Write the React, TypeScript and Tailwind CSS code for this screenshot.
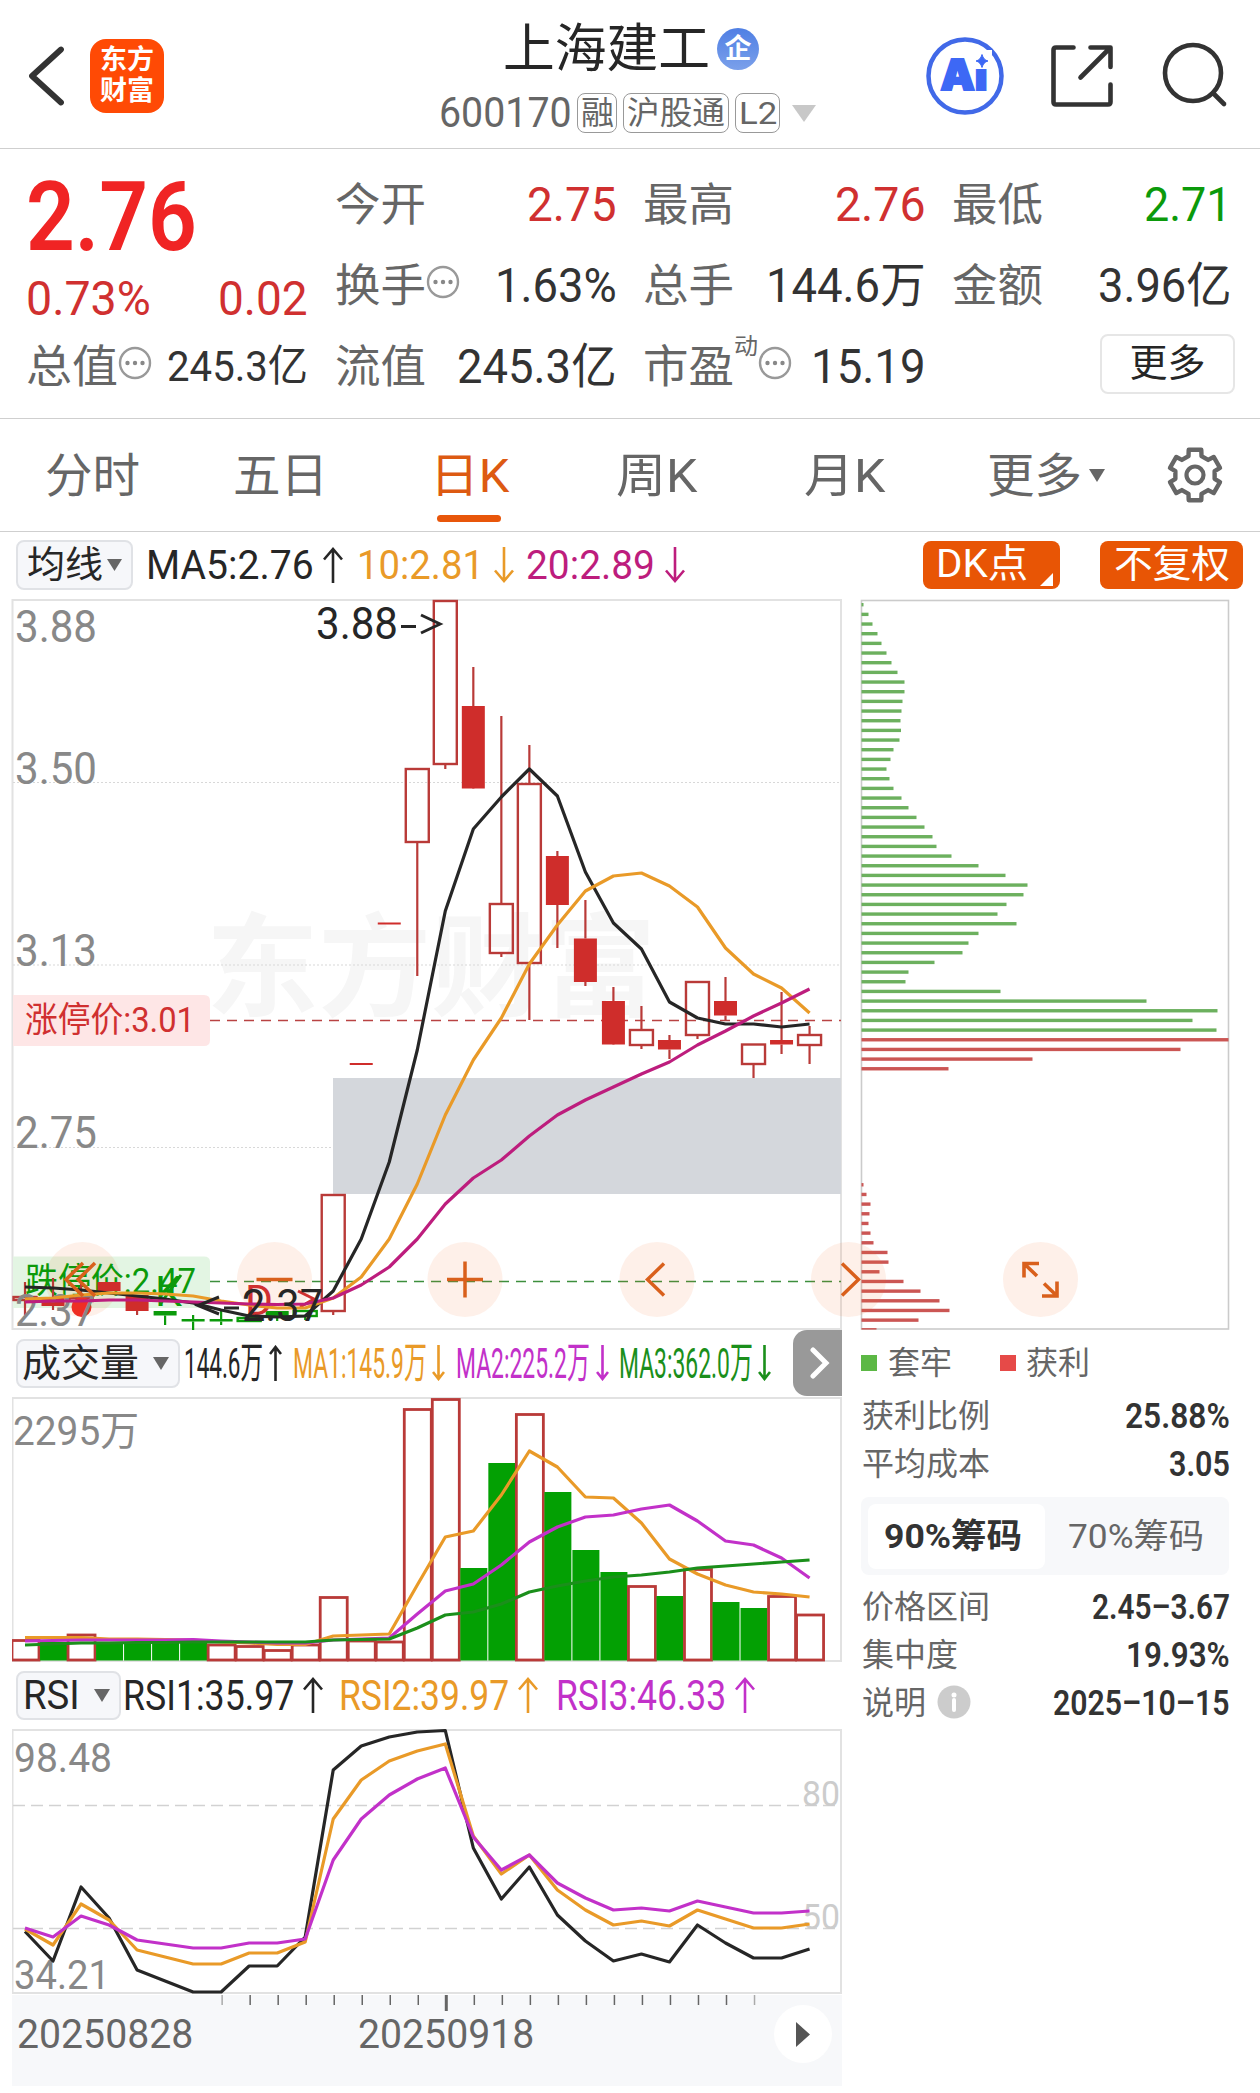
import React, { useLayoutEffect, useRef, useState } from "react";

/* ---------- helpers ---------- */

const FONT = "font-[Roboto,'Noto_Sans_CJK_SC',sans-serif]";

/** One line of text, condensed or widened to the given width. */
function Fit({ w, className = "", children }: { w: number; className?: string; children: React.ReactNode }) {
  const ref = useRef<HTMLSpanElement>(null);
  const [scale, setScale] = useState(1);
  useLayoutEffect(() => {
    if (ref.current) setScale(w / ref.current.offsetWidth);
  }, [w]);
  return (
    <span className={`block shrink-0 whitespace-nowrap ${className}`} style={{ width: w }}>
      <span ref={ref} className="inline-block origin-left" style={{ transform: `scaleX(${scale})` }}>
        {children}
      </span>
    </span>
  );
}

function Dots({ className = "" }: { className?: string }) {
  return (
    <svg width="34" height="34" viewBox="0 0 34 34" className={`shrink-0 ${className}`}>
      <circle cx="17" cy="17" r="15" fill="none" stroke="#999" strokeWidth="2.4" />
      <circle cx="9.5" cy="17" r="2.2" fill="#888" />
      <circle cx="17" cy="17" r="2.2" fill="#888" />
      <circle cx="24.5" cy="17" r="2.2" fill="#888" />
    </svg>
  );
}

function Down({ w, h, color = "#666", className = "" }: { w: number; h: number; color?: string; className?: string }) {
  return (
    <svg width={w} height={h} viewBox="0 0 10 10" preserveAspectRatio="none" className={`shrink-0 ${className}`}>
      <path d="M0 0H10L5 10Z" fill={color} />
    </svg>
  );
}

function Arrow({ up, w, color, className = "" }: { up?: boolean; w: number; color: string; className?: string }) {
  return (
    <svg width={w} height="36" viewBox={`0 0 ${w} 36`} className={`shrink-0 ${className}`}>
      <g fill="none" stroke={color} strokeWidth="2.6" transform={up ? undefined : "rotate(180 " + w / 2 + " 18)"}>
        <path d={`M${w / 2} 36V2M1 ${w / 2 + 2.5}L${w / 2} 2L${w - 1} ${w / 2 + 2.5}`} />
      </g>
    </svg>
  );
}

const RED = "#d03030";
const CANDLE = "#b93a38";
const GREEN = "#0b9a0b";
const ORANGE = "#e99a28";
const MAGENTA = "#bd1d7d";
const PURPLE = "#c231c9";
const INK = "#262626";

const cx = (i: number) => 25 + 28.02 * i;
const line = (ys: number[]) => ys.map((y, i) => `${cx(i)},${y}`).join(" ");

/* ---------- data ---------- */

const MA5 = [1287, 1288, 1290, 1293, 1296, 1299, 1303, 1310, 1316, 1317, 1316, 1291, 1239, 1162, 1050, 911, 829, 797, 769, 796, 872, 923, 949, 1002, 1018, 1024, 1024, 1027, 1024];
const MA10 = [1299, 1298, 1295, 1293, 1293, 1294, 1296, 1301, 1305, 1308, 1308, 1298, 1277, 1239, 1184, 1115, 1060, 1018, 964, 925, 891, 876, 873, 886, 907, 948, 974, 988, 1013];
const MA20 = [1302, 1301, 1301, 1300, 1300, 1301, 1302, 1303, 1304, 1304.5, 1304, 1298, 1285, 1267, 1239, 1204, 1178, 1160, 1136, 1115, 1100, 1087, 1074, 1062, 1045, 1031, 1016, 1003, 989];

/** kind, body top, body bottom, wick top, wick bottom */
type Candle = ["h" | "f" | "g" | "gh", number, number, number, number];
const CANDLES: Candle[] = [
  ["h", 1297, 1300, 1282, 1315],
  ["f", 1298, 1306, 1278, 1310],
  ["h", 1298, 1301, 1284, 1304],
  ["f", 1282, 1291, 1282, 1291],
  ["f", 1295, 1311, 1295, 1315],
  ["g", 1311, 1315.5, 1311, 1325],
  ["g", 1319, 1321.5, 1315, 1330],
  ["g", 1319, 1321.5, 1309, 1325],
  ["gh", 1318, 1321, 1318, 1321],
  ["g", 1311, 1318, 1311, 1321],
  ["gh", 1311, 1316, 1311, 1320],
  ["h", 1195, 1311, 1195, 1315],
  ["f", 1063, 1065, 1063, 1065],
  ["f", 922.5, 924.5, 922.5, 924.5],
  ["h", 769, 842, 769, 976],
  ["h", 601, 764, 601, 769],
  ["f", 706, 788.5, 667, 789],
  ["h", 904, 953, 716, 957],
  ["h", 784, 963, 745, 1020],
  ["f", 856, 905, 851, 948],
  ["f", 938.5, 982, 900, 986],
  ["f", 1001, 1044.5, 987, 1045],
  ["h", 1030, 1045, 1006, 1049],
  ["f", 1040, 1049.5, 1035, 1059],
  ["h", 982, 1035, 982, 1039],
  ["f", 1001, 1015.5, 977, 1020],
  ["h", 1044.5, 1064, 1044.5, 1078],
  ["f", 1040, 1044.5, 992, 1054],
  ["h", 1035, 1045, 1026, 1064],
];

const VOL: ["r" | "g", number][] = [
  ["r", 1640.5], ["g", 1642], ["r", 1635], ["g", 1643], ["g", 1643], ["g", 1643], ["g", 1643], ["r", 1645], ["r", 1646.5], ["r", 1650.5],
  ["r", 1645], ["r", 1597.5], ["r", 1641], ["r", 1642], ["r", 1409.5], ["r", 1399.5], ["g", 1568], ["g", 1463], ["r", 1414.5], ["g", 1492],
  ["g", 1550], ["g", 1572], ["r", 1586.5], ["g", 1596], ["r", 1569.5], ["g", 1602], ["g", 1608], ["r", 1596.5], ["r", 1615],
];
const V5 = [1637.5, 1637.5, 1637.5, 1639, 1639, 1639.5, 1640, 1642, 1643, 1644.5, 1644.5, 1636, 1635, 1634, 1585, 1537, 1531, 1495, 1451, 1467, 1497, 1498, 1523, 1559, 1574, 1585, 1592, 1594, 1597];
const V10 = [1641, 1640.5, 1640, 1640, 1640, 1640, 1639.5, 1641, 1642, 1643, 1643, 1640, 1639, 1638, 1614, 1591, 1584, 1565, 1542, 1527, 1517, 1515, 1509, 1505, 1521, 1541, 1545, 1558, 1578];
const V20 = [1645, 1644, 1643, 1643, 1642.5, 1642.5, 1642, 1642, 1642, 1642, 1642, 1640, 1639.5, 1639, 1628, 1615, 1612, 1604, 1592, 1586, 1581, 1577, 1575, 1572, 1568, 1566, 1564, 1562, 1560];

const R1 = [1931.5, 1961, 1887, 1918, 1970, 1981, 1992, 1992, 1966, 1966, 1937, 1770, 1746, 1737, 1732, 1730.5, 1848, 1899, 1867, 1915, 1941, 1961, 1954, 1962, 1925, 1943, 1958, 1958, 1949];
const R2 = [1929, 1945, 1904, 1920, 1950, 1957, 1964, 1964, 1953, 1953, 1942, 1819, 1780, 1761, 1751, 1744, 1836, 1874, 1855, 1890, 1910, 1925, 1921, 1926, 1910, 1919, 1928, 1928, 1924];
const R3 = [1928, 1937, 1916, 1925, 1940, 1944, 1948, 1948, 1943, 1943, 1939, 1860, 1819, 1795, 1779, 1768, 1837, 1870, 1855, 1883, 1898, 1910, 1908, 1911, 1901, 1907, 1913, 1913, 1911];

const CHIPS_GREEN = [
  2, 7, 11, 16, 20, 25, 30, 36, 43, 43, 41, 40, 39, 39.5, 38, 32, 29, 25, 28, 32, 40, 47, 55, 63, 71, 75, 90, 117, 144, 166, 162, 145, 136, 155, 117, 107,
  101, 73, 47, 44, 139, 285, 356, 331, 355,
];
const CHIPS_RED = [367, 319, 171, 87];
const CHIPS_RED_LOW = [2, 5, 9, 8, 7, 9, 12, 26, 27, 18, 42, 59, 78, 88, 57, 15];

/* ---------- header ---------- */

function Tag({ w, inner, children }: { w: number; inner: number; children: React.ReactNode }) {
  return (
    <span className="flex h-10 shrink-0 items-center justify-center rounded-lg border-[1.5px] border-[#999] text-[32px] leading-none text-[#666]" style={{ width: w }}>
      <Fit w={inner}>{children}</Fit>
    </span>
  );
}

function Header() {
  return (
    <header className="flex h-[149px] border-b border-[#cfcfcf]">
      <div className="flex w-[439px] shrink-0 items-start pl-7 pt-[39px]">
        <svg width="36" height="74" viewBox="28 39 36 74">
          <path d="M61 49.500L32 76L61 102.500" fill="none" stroke="#333" strokeWidth="5.800" strokeLinecap="round" strokeLinejoin="round" />
        </svg>
        <div className="ml-[26px] flex h-[74px] w-[74px] flex-col items-center justify-center rounded-[16px] bg-[#ff4a05] text-[27px] font-bold leading-[31px] text-white">
          <Fit w={54}>东方</Fit>
          <Fit w={54}>财富</Fit>
        </div>
      </div>
      <div className="w-[378px] shrink-0 pt-[17px]">
        <div className="flex h-16 items-center pl-[64px] text-[52px] leading-none text-[#262626]">
          <Fit w={207} className="pt-0.5">上海建工</Fit>
          <span className="ml-[7px] flex h-[42px] w-[42px] items-center justify-center rounded-full bg-gradient-to-b from-[#4f7fe4] to-[#7ba0ea] text-[27px] font-bold leading-none text-white">
            企
          </span>
        </div>
        <div className="flex h-16 items-center text-[42px] leading-none text-[#666]">
          <Fit w={133} className="mr-[5px]">600170</Fit>
          <Tag w={40} inner={33}>融</Tag>
          <span className="w-1.5 shrink-0" />
          <Tag w={106} inner={98}>沪股通</Tag>
          <span className="w-1.5 shrink-0" />
          <Tag w={45} inner={38}>L2</Tag>
          <Down w={24} h={17} color="#c8c8c8" className="ml-3" />
        </div>
      </div>
      <svg width="320" height="110" viewBox="920 20 320 110" className="ml-[103px] mt-5">
        <circle cx="965" cy="76" r="36.500" fill="none" stroke="#4169e8" strokeWidth="4.500" />
        <text x="940.500" y="90" fontSize="42" fontWeight="900" fill="#3d68f5" stroke="#3d68f5" strokeWidth="2" textLength="47" lengthAdjust="spacingAndGlyphs" className="font-[Inter,sans-serif]">
          Ai
        </text>
        <rect x="971" y="50" width="21" height="19" fill="#fff" />
        <path d="M982 54.500Q983.500 60 988 61Q983.500 62 982 67.500Q980.500 62 976 61Q980.500 60 982 54.500Z" fill="#3d68f5" stroke="#3d68f5" />
        <g fill="none" stroke="#333" strokeWidth="4.600" strokeLinecap="round" strokeLinejoin="round">
          <path d="M1073.500 47.500H1056Q1053.500 47.500 1053.500 50V102Q1053.500 104.500 1056 104.500H1108Q1110.500 104.500 1110.500 102V84.500" />
          <path d="M1090.500 47.500H1110.500V67M1110 48L1080.500 77.500" />
          <circle cx="1193" cy="73" r="28" />
          <path d="M1213 93L1224 104" />
        </g>
      </svg>
    </header>
  );
}

/* ---------- quote ---------- */

function Cell({ label, lw = 91, dots, sup, value, vw, small, color = "text-[#333]" }: { label: string; lw?: number; dots?: boolean; sup?: string; value?: string; vw?: number; small?: boolean; color?: string }) {
  return (
    <div className="flex h-[81px] items-center justify-between leading-none">
      <div className="flex items-center">
        <Fit w={lw} className="pt-0.5 text-[45px] leading-[46px] text-[#666]">{label}</Fit>
        {sup && <Fit w={24} className="mb-10 text-[23px] leading-6 text-[#666]">{sup}</Fit>}
        {dots && <Dots className="mb-[7px]" />}
      </div>
      {value && <Fit w={vw ?? 90} className={`${small ? "text-[43px]" : "text-[48px]"} ${color}`}>{value}</Fit>}
    </div>
  );
}

function Quote() {
  return (
    <section className="flex h-[270px] border-b border-[#cfcfcf] pl-[26px] pt-[15px]">
      <div className="w-[282px]">
        <div className="flex h-[106px] items-center text-[96px] font-semibold leading-none text-[#f02424]">
          <Fit w={171}>2.76</Fit>
        </div>
        <div className="flex h-14 items-center justify-between pt-0.5 text-[48px] leading-none text-[#d03030]">
          <Fit w={125}>0.73%</Fit>
          <Fit w={90}>0.02</Fit>
        </div>
        <Cell label="总值" lw={92} dots value="245.3亿" vw={141} small />
      </div>
      <div className="ml-[27px] w-[282px]">
        <Cell label="今开" value="2.75" vw={90} color="text-[#d03030]" />
        <Cell label="换手" dots value="1.63%" vw={122} />
        <Cell label="流值" value="245.3亿" vw={160} />
      </div>
      <div className="ml-[26px] w-[283px]">
        <Cell label="最高" value="2.76" vw={91} color="text-[#d03030]" />
        <Cell label="总手" value="144.6万" vw={160} />
        <Cell label="市盈" sup="动" dots value="15.19" vw={115} />
      </div>
      <div className="ml-[26px] w-[280px]">
        <Cell label="最低" value="2.71" vw={88} color="text-[#0b9a0b]" />
        <Cell label="金额" value="3.96亿" vw={134} />
        <div className="ml-[148px] mt-[8px] flex h-[60px] w-[135px] items-center justify-center rounded-lg border-2 border-[#e6e6e6] text-[38px] leading-none text-[#262626]">
          <Fit w={76} className="pb-0.5">更多</Fit>
        </div>
      </div>
    </section>
  );
}

/* ---------- tabs ---------- */

function gearPath() {
  const pts: string[] = [];
  for (let k = 0; k < 6; k++) {
    const a = -90 + 60 * k;
    for (const [d, r] of [[-19, 20], [-14, 26], [14, 26], [19, 20]]) {
      const t = ((a + d) * Math.PI) / 180;
      pts.push(`${(28 + r * Math.cos(t)).toFixed(2)},${(28 + r * Math.sin(t)).toFixed(2)}`);
    }
  }
  return pts.join(" ");
}

function Tabs() {
  return (
    <nav className="flex h-[113px] items-start border-b border-[#cfcfcf] pt-[28px] text-[47px] leading-[58px] text-[#666]">
      <Fit w={95} className="ml-[45px]">分时</Fit>
      <Fit w={95} className="ml-[93px]">五日</Fit>
      <div className="ml-[102px] w-[79px] text-[#dd5a12]">
        <Fit w={80}>日K</Fit>
        <div className="ml-[7px] mt-[10px] h-[7px] w-[64px] rounded-full bg-[#e8560a]" />
      </div>
      <Fit w={82} className="ml-[107px]">周K</Fit>
      <Fit w={82} className="ml-[106px]">月K</Fit>
      <Fit w={95} className="ml-[101px]">更多</Fit>
      <Down w={16} h={13} className="ml-[7px] mt-[22px]" />
      <svg width="56" height="56" viewBox="0 0 56 56" className="ml-[62px]">
        <polygon points={gearPath()} fill="none" stroke="#666" strokeWidth="4.400" strokeLinejoin="round" />
        <circle cx="28" cy="28" r="8.500" fill="none" stroke="#666" strokeWidth="4.200" />
      </svg>
    </nav>
  );
}

/* ---------- indicator rows ---------- */

const PILL = "flex shrink-0 items-center rounded-lg border-2 border-[#e0e2e6] bg-[#f6f7fa] text-[#262626]";

function AverageRow() {
  return (
    <div className="flex h-[66px] items-center text-[41px] leading-none">
      <div className={`${PILL} ml-4 h-[50px] w-[117px] pl-[9px] text-[37px]`}>
        <Fit w={76}>均线</Fit>
        <Down w={15} h={12} className="ml-[4px]" />
      </div>
      <Fit w={168} className="ml-[13px] text-[#262626]">MA5:2.76</Fit>
      <Arrow up w={20} color={INK} className="ml-[9px]" />
      <Fit w={127} className="ml-[14px] text-[#e99a28]">10:2.81</Fit>
      <Arrow w={20} color={ORANGE} className="ml-[10px]" />
      <Fit w={129} className="ml-[12px] text-[#bd1d7d]">20:2.89</Fit>
      <Arrow w={20} color={MAGENTA} className="ml-[10px]" />
      <div className="ml-[238px] flex h-12 w-[137px] items-center rounded-lg bg-[#e85505] pl-[13px] text-[39px] text-white">
        <Fit w={92} className="pb-0.5">DK点</Fit>
        <svg width="13" height="13" viewBox="0 0 13 13" className="ml-[12px] mt-7">
          <path d="M13 0V13H0Z" fill="#fff" />
        </svg>
      </div>
      <div className="ml-[40px] flex h-12 w-[143px] items-center justify-center rounded-lg bg-[#e85505] text-[38px] text-white">
        <Fit w={116} className="pb-0.5">不复权</Fit>
      </div>
    </div>
  );
}

function VolumeRow() {
  return (
    <div className="flex h-[66px] items-center text-[43px] leading-none">
      <div className={`${PILL} ml-[4px] h-[49px] w-[164px] pl-[4px] text-[38px]`}>
        <Fit w={117}>成交量</Fit>
        <Down w={16} h={13} className="ml-[14px]" />
      </div>
      <Fit w={79} className="ml-[4px] text-[#262626]">144.6万</Fit>
      <Arrow up w={13} color={INK} className="ml-[6px]" />
      <Fit w={134} className="ml-[11px] text-[#e99a28]">MA1:145.9万</Fit>
      <Arrow w={13} color={ORANGE} className="ml-[5px]" />
      <Fit w={134} className="ml-[11px] text-[#c231c9]">MA2:225.2万</Fit>
      <Arrow w={13} color={PURPLE} className="ml-[6px]" />
      <Fit w={134} className="ml-[10px] text-[#1b8f1b]">MA3:362.0万</Fit>
      <Arrow w={13} color="#1b8f1b" className="ml-[5px]" />
      <div className="ml-auto flex h-[66px] w-[49px] items-center justify-center rounded-l-[14px] bg-[#999]">
        <svg width="20" height="32" viewBox="0 0 20 32" className="ml-1">
          <path d="M3 3L16 16L3 29" fill="none" stroke="#fff" strokeWidth="5" strokeLinecap="round" />
        </svg>
      </div>
    </div>
  );
}

function RsiRow() {
  return (
    <div className="flex h-[66px] items-center text-[43px] leading-none">
      <div className={`${PILL} ml-[4px] h-[49px] w-[105px] pl-[5px]`}>
        <Fit w={57} className="text-[41px]">RSI</Fit>
        <Down w={16} h={13} className="ml-[14px]" />
      </div>
      <Fit w={171} className="ml-[2px] text-[#262626]">RSI1:35.97</Fit>
      <Arrow up w={20} color={INK} className="ml-[9px]" />
      <Fit w={170} className="ml-[16px] text-[#e99a28]">RSI2:39.97</Fit>
      <Arrow up w={20} color={ORANGE} className="ml-[9px]" />
      <Fit w={170} className="ml-[18px] text-[#c231c9]">RSI3:46.33</Fit>
      <Arrow up w={20} color={PURPLE} className="ml-[9px]" />
    </div>
  );
}

/* ---------- charts ---------- */

function Label({ x, y, w, size = 44, fill = "#888", children }: { x: number; y: number; w: number; size?: number; fill?: string; children: string }) {
  return (
    <text x={x} y={y} fontSize={size} fill={fill} textLength={w} lengthAdjust="spacingAndGlyphs">
      {children}
    </text>
  );
}

function PriceChart() {
  return (
    <svg width="830" height="732" viewBox="12 598 830 732" className="relative z-10 block overflow-visible">
      <text x="206" y="1008" fontSize="112" fontWeight="700" fill="#f6f6f6" textLength="450" lengthAdjust="spacingAndGlyphs">
        东方财富
      </text>
      <rect x="12.500" y="600" width="828.500" height="729" fill="none" stroke="#e2e2e2" strokeWidth="2" />
      <g stroke="#d8d8d8" strokeWidth="1.200" strokeDasharray="2 2">
        <path d="M13 782.500H841M13 965H841M13 1147.500H841" />
      </g>
      <rect x="333" y="1078" width="508" height="116" fill="#d4d7dc" />
      <path d="M210 1020.500H841" stroke="#b94343" strokeWidth="1.300" strokeDasharray="10 7" />
      <path d="M210 1281.500H841" stroke="#3d8f3d" strokeWidth="1.300" strokeDasharray="10 7" />
      <path d="M13 995H204Q210 995 210 1001V1040Q210 1046 204 1046H13Z" fill="#fee6e6" />
      <path d="M13 1256.500H204Q210 1256.500 210 1262V1302Q210 1308 204 1308H13Z" fill="#e3f5e3" />
      <Label x={25} y={1032} w={170} size={35} fill={RED}>涨停价:3.01</Label>

      {[82.500, 274.500, 465, 657, 848.500, 1040.500].map((x) => (
        <circle key={x} cx={x} cy="1279.500" r="37.500" fill="#f96a2a" fillOpacity="0.1" />
      ))}
      <Label x={25} y={1293} w={171} size={35} fill={GREEN}>跌停价:2.47</Label>

      {CANDLES.map(([kind, top, bottom, wt, wb], i) => {
        const x = cx(i);
        const hollow = kind === "h" || kind === "gh";
        const stroke = kind[0] === "g" ? GREEN : CANDLE;
        const solid = kind === "g" ? GREEN : "#cf2d2b";
        return (
          <g key={i} stroke={stroke} strokeWidth="2.200">
            {wt < top && <path d={`M${x} ${wt}V${top}`} />}
            {wb > bottom && <path d={`M${x} ${bottom}V${wb}`} />}
            {hollow ? (
              <rect x={x - 11.500} y={top} width="23" height={bottom - top} fill="none" strokeWidth="2.400" />
            ) : (
              <rect x={x - 11.500} y={top} width="23" height={bottom - top} fill={solid} stroke="none" />
            )}
          </g>
        );
      })}
      <circle cx="81.500" cy="1307" r="10" fill="#ee2e24" />
      <Label x={155} y={1306} w={27} size={43} fill={GREEN}>K</Label>
      <path d="M161 1303L181 1275" stroke={GREEN} strokeWidth="3" />
      <Label x={245} y={1315} w={28} size={43} fill={RED}>D</Label>
      <path d="M298 1291L314 1299L300 1307" fill="none" stroke={RED} strokeWidth="3" />

      <Label x={15} y={641.500} w={82}>3.88</Label>
      <Label x={15} y={784} w={82}>3.50</Label>
      <Label x={15} y={966} w={82}>3.13</Label>
      <Label x={15} y={1148} w={82}>2.75</Label>
      <Label x={15} y={1325.500} w={81}>2.37</Label>
      <Label x={316} y={639} w={82} fill={INK}>3.88</Label>
      <path d="M401 626.500H416" stroke={INK} strokeWidth="3" />
      <path d="M421 615L440 624L421 633" fill="none" stroke={INK} strokeWidth="3" />

      <g fill="none" strokeWidth="3.200" strokeLinejoin="round">
        <polyline points={line(MA5)} stroke={INK} />
        <polyline points={line(MA10)} stroke={ORANGE} />
        <polyline points={line(MA20)} stroke={MAGENTA} />
      </g>
      <path d="M219 1297L198 1305.500L219 1314M224 1308H239" fill="none" stroke={INK} strokeWidth="3" />
      <Label x={242} y={1321} w={81} fill={INK}>2.37</Label>

      <g fill="none" stroke="#d9601c" strokeWidth="3.500">
        <path d="M83 1263L66 1279.500L83 1296M95 1263L78 1279.500L95 1296" />
        <path d="M256.500 1279.500H292.500" />
        <path d="M447 1279.500H483M465 1261.500V1297.500" />
        <path d="M664 1263.500L647.500 1279.500L664 1295.500" />
        <path d="M842 1263.500L858.500 1279.500L842 1295.500" />
        <path d="M1039 1263.500H1024V1277.500M1024.500 1264L1037 1276M1042 1296H1057V1281.500M1056.500 1295.500L1044 1283.500" strokeWidth="3.600" />
      </g>
    </svg>
  );
}

function VolumeChart() {
  return (
    <svg width="830" height="266" viewBox="12 1396 830 266" className="block">
      <rect x="12.500" y="1398" width="828.500" height="263" fill="none" stroke="#e2e2e2" strokeWidth="2" />
      <Label x={13} y={1445} w={126} size={40}>2295万</Label>
      {VOL.map(([kind, top], i) =>
        kind === "g" ? (
          <rect key={i} x={cx(i) - 13} y={top} width="27" height={1660.500 - top} fill="#03a003" />
        ) : (
          <rect key={i} x={cx(i) - 13} y={top} width="27" height={1660 - top} fill="#fff" stroke={CANDLE} strokeWidth="2.800" />
        ),
      )}
      <g fill="none" strokeWidth="3.200" strokeLinejoin="round">
        <polyline points={line(V5)} stroke={ORANGE} />
        <polyline points={line(V10)} stroke={PURPLE} />
        <polyline points={line(V20)} stroke="#1b8f1b" />
      </g>
    </svg>
  );
}

function RsiChart() {
  return (
    <svg width="830" height="267" viewBox="12 1728 830 267" className="block">
      <rect x="12.500" y="1730" width="828.500" height="263" fill="none" stroke="#e2e2e2" strokeWidth="2" />
      <path d="M13 1805.500H841M13 1928.500H841" stroke="#d2d2d2" strokeWidth="1.300" strokeDasharray="12 6" />
      <Label x={802} y={1806} w={38} size={35} fill="#ccc">80</Label>
      <Label x={802} y={1928.500} w={38} size={35} fill="#ccc">50</Label>
      <Label x={14} y={1772} w={98} size={40}>98.48</Label>
      <Label x={14} y={1989} w={96} size={40}>34.21</Label>
      <g fill="none" strokeWidth="3.200" strokeLinejoin="round">
        <polyline points={line(R1)} stroke={INK} />
        <polyline points={line(R2)} stroke={ORANGE} />
        <polyline points={line(R3)} stroke={PURPLE} />
      </g>
    </svg>
  );
}

function TimeAxis() {
  return (
    <div className="h-[91px] bg-[#f7f8fa]">
      <svg width="830" height="17" viewBox="12 1995 830 17" className="block">
        {Array.from({ length: 20 }, (_, k) => k + 7).map((i) => (
          <path key={i} d={`M${cx(i) + 1} 1995V${i === 15 ? 2011 : 2005}`} stroke={i === 7 || i === 26 ? "#aaa" : "#666"} strokeWidth={i === 15 ? 3 : 1.500} />
        ))}
      </svg>
      <div className="flex items-center pl-[5px] text-[41px] leading-none text-[#666]">
        <Fit w={176} className="-mt-1.5">20250828</Fit>
        <Fit w={176} className="-mt-1.5 ml-[165px]">20250918</Fit>
        <div className="-mt-[7px] ml-[240px] flex h-[58px] w-[58px] items-center justify-center rounded-full bg-white">
          <svg width="14" height="25" viewBox="0 0 14 25">
            <path d="M0 0L14 12.500L0 25Z" fill="#555" />
          </svg>
        </div>
      </div>
    </div>
  );
}

/* ---------- cost distribution ---------- */

function ChipChart() {
  const step = 9.668;
  const bars = [
    ...CHIPS_GREEN.map((w, k) => ({ k, w, c: "#6cb05e" })),
    ...CHIPS_RED.map((w, k) => ({ k: k + 45, w, c: "#cb5654" })),
    ...CHIPS_RED_LOW.map((w, k) => ({ k: k + 60, w, c: "#cb5654" })),
  ];
  return (
    <svg width="370" height="732" viewBox="860 598 370 732" className="block">
      <rect x="861.500" y="600.500" width="367" height="728.500" fill="none" stroke="#cbcbcb" strokeWidth="1.600" />
      {bars.map(({ k, w, c }) => (
        <rect key={k} x="861.500" y={604.700 + k * step - 1.700} width={w} height={k === 75 ? 1.500 : 3.400} fill={c} />
      ))}
    </svg>
  );
}

function Fact({ label, lw, value, vw, info }: { label: string; lw: number; value: string; vw: number; info?: boolean }) {
  return (
    <div className="flex h-12 items-center leading-none">
      <Fit w={lw} className="ml-[1px] text-[32px] text-[#666]">{label}</Fit>
      {info && (
        <svg width="34" height="34" viewBox="0 0 34 34" className="-mt-0.5 ml-[11px]">
          <circle cx="17" cy="17" r="16.500" fill="#ccc" />
          <circle cx="17" cy="10" r="2.500" fill="#fff" />
          <path d="M17 15V25" stroke="#fff" strokeWidth="4" strokeLinecap="round" />
        </svg>
      )}
      <Fit w={vw} className="ml-auto text-[35px] font-semibold text-[#333]">{value}</Fit>
    </div>
  );
}

function ChipPanel() {
  return (
    <aside className="ml-[18px] w-[370px]">
      <ChipChart />
      <div className="ml-[1px] w-[369px]">
        <div className="flex h-[62px] items-center pt-[4px] text-[32px] leading-none text-[#666]">
          <span className="h-4 w-4 bg-[#5cb845]" />
          <Fit w={64} className="ml-[11px]">套牢</Fit>
          <span className="ml-[48px] h-4 w-4 bg-[#e64a48]" />
          <Fit w={64} className="ml-[10px]">获利</Fit>
        </div>
        <Fact label="获利比例" lw={128} value="25.88%" vw={105} />
        <Fact label="平均成本" lw={128} value="3.05" vw={61} />
        <div className="mt-[9px] flex h-[78px] w-[368px] items-center rounded-lg bg-[#f7f8fa] p-[7px] text-[34px] leading-none">
          <div className="flex h-[65px] w-[177px] items-center rounded-lg bg-white pl-4 font-bold text-[#333]">
            <Fit w={138}>90%筹码</Fit>
          </div>
          <div className="flex flex-1 items-center justify-center text-[#666]">
            <Fit w={136} className="ml-1">70%筹码</Fit>
          </div>
        </div>
        <div className="h-[8px]" />
        <Fact label="价格区间" lw={128} value="2.45–3.67" vw={138} />
        <Fact label="集中度" lw={96} value="19.93%" vw={104} />
        <Fact label="说明" lw={64} value="2025–10–15" vw={177} info />
      </div>
    </aside>
  );
}

export default function App() {
  return (
    <main className={`h-[2093px] w-[1260px] overflow-hidden bg-white ${FONT}`}>
      <Header />
      <Quote />
      <Tabs />
      <AverageRow />
      <div className="flex pl-3">
        <div className="w-[830px] shrink-0">
          <PriceChart />
          <VolumeRow />
          <VolumeChart />
          <RsiRow />
          <RsiChart />
          <TimeAxis />
        </div>
        <ChipPanel />
      </div>
    </main>
  );
}
